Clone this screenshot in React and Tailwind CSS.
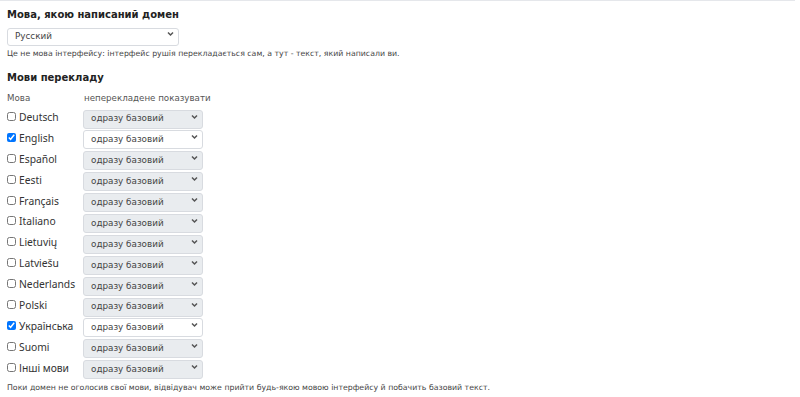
import { useState } from 'react';

const LANGS = [
  { name: 'Deutsch', on: false },
  { name: 'English', on: true },
  { name: 'Español', on: false },
  { name: 'Eesti', on: false },
  { name: 'Français', on: false },
  { name: 'Italiano', on: false },
  { name: 'Lietuvių', on: false },
  { name: 'Latviešu', on: false },
  { name: 'Nederlands', on: false },
  { name: 'Polski', on: false },
  { name: 'Українська', on: true },
  { name: 'Suomi', on: false },
  { name: 'Інші мови', on: false },
];

const Chevron = () => (
  <svg className="absolute right-[5px] top-1/2 -translate-y-1/2 pointer-events-none" width="7" height="5" viewBox="0 0 7 5">
    <path d="M1 1 L3.5 3.5 L6 1" fill="none" stroke="#555" strokeWidth="1.5" />
  </svg>
);

const Select = ({ value, width, muted, height = 'h-[19px]' }) => (
  <div className={`relative ${width}`}>
    <select
      defaultValue={value}
      className={`appearance-none w-full ${height} pl-[7px] pr-5 text-[8.8px] text-[#444] border border-[#d8dbe0] rounded-[3px] outline-none ${muted ? 'bg-[#e9ecef]' : 'bg-white'}`}
    >
      <option>{value}</option>
    </select>
    <Chevron />
  </div>
);

const App = () => {
  const [langs, setLangs] = useState(LANGS);

  const toggle = (i) => {
    setLangs(langs.map((l, j) => (j === i ? { ...l, on: !l.on } : l)));
  };

  return (
    <div className="w-[795px] border-t border-[#e5e7eb] bg-white text-[#222] px-[7px] pt-[7px] font-['DejaVu_Sans',Verdana,sans-serif]">
      {/* Domain language */}
      <h2 className="text-[10px] font-bold leading-[14px]">Мова, якою написаний домен</h2>
      <div className="mt-0">
        <Select value="Русский" width="w-[172px]" height="h-[18px]" />
      </div>
      <p className="mt-[2px] text-[7.8px] text-[#444] leading-[12px]">
        Це не мова інтерфейсу: інтерфейс рушія перекладається сам, а тут - текст, який написали ви.
      </p>

      {/* Translation languages */}
      <h2 className="mt-[11px] text-[10px] font-bold leading-[14px]">Мови перекладу</h2>
      <div className="mt-[6px] flex text-[8.7px] text-[#555] leading-[14px]">
        <span className="w-[77px]">Мова</span>
        <span>неперекладене показувати</span>
      </div>
      <div className="mt-[2px] flex flex-col gap-[1.9px]">
        {langs.map((l, i) => (
          <div key={l.name} className="flex items-center h-[19px]">
            <label className="w-[76px] flex items-center gap-[3px] text-[10.3px] leading-[19px] text-[#333] font-['Noto_Sans',sans-serif]">
              <input
                type="checkbox"
                checked={l.on}
                onChange={() => toggle(i)}
                className="w-[9px] h-[9px] m-0"
              />
              <span className="translate-y-[1px]">{l.name}</span>
            </label>
            <Select value="одразу базовий" width="w-[120px]" muted={!l.on} />
          </div>
        ))}
      </div>
      <p className="mt-[5px] text-[7.8px] text-[#444] leading-[12px]">
        Поки домен не оголосив свої мови, відвідувач може прийти будь-якою мовою інтерфейсу й побачить базовий текст.
      </p>
    </div>
  );
};

export default App;
